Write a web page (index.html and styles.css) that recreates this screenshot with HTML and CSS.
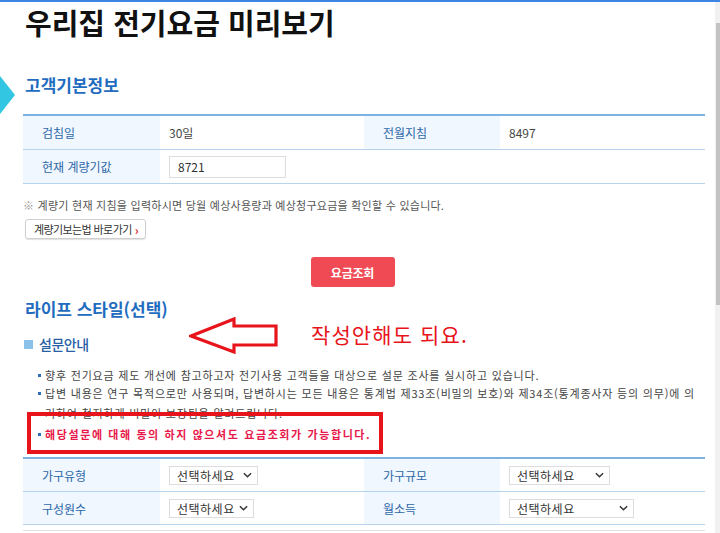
FILE: index.html
```html
<!DOCTYPE html>
<html lang="ko">
<head>
<meta charset="utf-8">
<title>우리집 전기요금 미리보기</title>
<link rel="stylesheet" href="styles.css">
</head>
<body>
<div class="topbar"></div>
<div class="scrollbar"><div class="thumb"></div></div>
<div class="page">
  <h1 class="title">우리집 전기요금 미리보기</h1>

  <h2 class="sec sec-first">고객기본정보</h2>
  <div class="grid">
    <div class="lab">검침일</div>
    <div class="val">30일</div>
    <div class="lab">전월지침</div>
    <div class="val">8497</div>
    <div class="lab">현재 계량기값</div>
    <div class="val"><div class="input">8721</div></div>
    <div class="lab blank"></div>
    <div class="val"></div>
  </div>

  <p class="note"><span class="mark">※</span> 계량기 현재 지침을 입력하시면 당월 예상사용량과 예상청구요금을 확인할 수 있습니다.</p>
  <div class="link-row"><span class="link-btn">계량기보는법 바로가기 <span class="chev">›</span></span></div>

  <div class="center"><span class="red-btn">요금조회</span></div>

  <h2 class="sec sec-second">라이프 스타일(선택)</h2>
  <h3 class="sub"><span class="sq"></span>설문안내</h3>
  <ul class="bullets">
    <li>향후 전기요금 제도 개선에 참고하고자 전기사용 고객들을 대상으로 설문 조사를 실시하고 있습니다.</li>
    <li>답변 내용은 연구 목적으로만 사용되며, 답변하시는 모든 내용은 통계법 제33조(비밀의 보호)와 제34조(통계종사자 등의 의무)에 의<span class="cont">거하여 철저하게 비밀이 보장됨을 알려드립니다.</span></li>
    <li class="warn">해당설문에 대해 동의 하지 않으셔도 요금조회가 가능합니다.</li>
  </ul>

  <div class="grid survey">
    <div class="lab">가구유형</div>
    <div class="val"><div class="sel w1">선택하세요<svg viewBox="0 0 10 6" class="dd"><path d="M1 1l4 4 4-4" fill="none" stroke="#333" stroke-width="1.6"/></svg></div></div>
    <div class="lab">가구규모</div>
    <div class="val"><div class="sel w2">선택하세요<svg viewBox="0 0 10 6" class="dd"><path d="M1 1l4 4 4-4" fill="none" stroke="#333" stroke-width="1.6"/></svg></div></div>
    <div class="lab">구성원수</div>
    <div class="val"><div class="sel w3">선택하세요<svg viewBox="0 0 10 6" class="dd"><path d="M1 1l4 4 4-4" fill="none" stroke="#333" stroke-width="1.6"/></svg></div></div>
    <div class="lab">월소득</div>
    <div class="val"><div class="sel w4">선택하세요<svg viewBox="0 0 10 6" class="dd"><path d="M1 1l4 4 4-4" fill="none" stroke="#333" stroke-width="1.6"/></svg></div></div>
  </div>
  <div class="next-line"></div>

  <svg class="anno-arrow" viewBox="0 0 90 38" width="90" height="38">
    <polygon points="2,19 45,2 45,9 87,9 87,28 45,28 45,35" fill="none" stroke="#e8141c" stroke-width="3.2" stroke-linejoin="miter"/>
  </svg>
  <div class="anno-text">작성안해도 되요.</div>
  <div class="anno-box"></div>
</div>
</body>
</html>
```

FILE: styles.css
```css
* { box-sizing: border-box; }
html, body { margin: 0; padding: 0; }
body {
  width: 720px;
  height: 533px;
  overflow: hidden;
  background: #fff;
  font-family: "Noto Sans CJK KR", "Noto Sans", sans-serif;
  color: #333;
  position: relative;
}
.topbar { height: 2px; background: #3d84e4; }
.scrollbar {
  position: absolute;
  right: 0; top: 2px;
  width: 5px; height: 531px;
  background: #f1f1f1;
}
.scrollbar .thumb {
  margin-top: 21px;
  margin-left: 1px;
  width: 4px; height: 282px;
  background: #c3c3c3;
}
.page {
  position: relative;
  display: flow-root;
  width: 705px;
  padding-left: 23px;
}
.title {
  margin: 5px 0 0 2px;
  font-size: 29px;
  line-height: 30px;
  letter-spacing: 0;
  font-weight: 700;
  color: #111;
}
.sec {
  position: relative;
  margin: 0 0 0 2px;
  font-size: 17px;
  line-height: 20px;
  letter-spacing: 0;
  font-weight: 700;
  color: #1f6cc0;
}
.sec-first { margin-top: 38px; margin-bottom: 19px; }
.sec-first::before {
  content: "";
  position: absolute;
  left: -25px; top: 1px;
  width: 15px; height: 38px;
  background: #33c6e2;
  clip-path: polygon(0 0, 100% 50%, 0 100%);
}
.grid {
  display: grid;
  grid-template-columns: 137px 204px 136px 205px;
  border-top: 2px solid #7db2e2;
}
.grid > div {
  height: 34px;
  border-bottom: 1px solid #b6d4ef;
  display: flex;
  align-items: center;
  font-size: 12px;
}
.lab {
  background: #f0f7fe;
  color: #2d68a8;
  padding-left: 19px;
  letter-spacing: 0;
}
.grid > .blank { background: #fff; }
.val {
  padding-left: 9px;
  color: #444;
}
.input {
  width: 117px;
  height: 22px;
  border: 1px solid #ddd;
  padding-left: 8px;
  display: flex;
  align-items: center;
  font-size: 12px;
  color: #333;
}
.note {
  margin: 13px 0 0 0;
  font-size: 11px;
  line-height: 16px;
  color: #555;
  letter-spacing: 0.25px;
}
.note .mark { color: #999; }
.link-row { margin-top: 2px; padding-left: 2px; }
.link-btn {
  display: inline-flex;
  align-items: center;
  height: 20px;
  padding: 0 7px 0 8px;
  border: 1px solid #cfcfcf;
  border-radius: 3px;
  box-shadow: 0 1px 1px rgba(0,0,0,0.12);
  font-size: 11px;
  color: #333;
  letter-spacing: -0.6px;
}
.link-btn .chev { color: #e0262d; font-weight: 700; margin-left: 3px; font-size: 12px; }
.center {
  display: flex;
  justify-content: center;
  margin-top: 18px;
  padding-right: 23px;
}
.red-btn {
  display: inline-flex;
  align-items: center;
  justify-content: center;
  width: 84px;
  height: 30px;
  background: #f04b54;
  border-radius: 3px;
  color: #fff;
  font-size: 12px;
  font-weight: 700;
  letter-spacing: -0.2px;
}
.sec-second { margin-top: 12px; }
.sub {
  display: flex;
  align-items: center;
  margin: 16px 0 0 1px;
  font-size: 14px;
  line-height: 18px;
  font-weight: 500;
  color: #2a5fa6;
  letter-spacing: -0.5px;
}
.sub .sq {
  width: 9px; height: 9px;
  background: #8cc2ea;
  margin-right: 6px;
}
.bullets {
  list-style: none;
  margin: 13px 0 0 0;
  padding: 0 0 0 22px;
  font-size: 11px;
  line-height: 18px;
  color: #444;
  letter-spacing: 0.8px;
}
.bullets li { position: relative; white-space: nowrap; }
.bullets li::before {
  content: "";
  position: absolute;
  left: -7px; top: 8px;
  width: 3px; height: 3px;
  background: #2f6db5;
}
.bullets .cont { display: block; margin-top: 2px; }
.bullets .warn {
  margin-top: 3px;
  color: #e8184a;
  font-weight: 700;
  letter-spacing: 1.6px;
}
.survey { margin-top: 14px; }
.survey > div { height: 33px; }
.sel {
  display: flex;
  align-items: center;
  justify-content: space-between;
  height: 19px;
  border: 1px solid #ddd;
  padding: 0 5px 0 7px;
  font-size: 12px;
  color: #333;
  letter-spacing: 0.5px;
}
.sel .dd { width: 9px; height: 6px; }
.w1 { width: 89px; }
.w2 { width: 101px; }
.w3 { width: 85px; }
.w4 { width: 125px; }
.next-line { margin-top: 5px; width: 682px; border-top: 1px solid #e2e2e2; }
.anno-arrow {
  position: absolute;
  left: 189px; top: 315px;
}
.anno-text {
  position: absolute;
  left: 311px; top: 317px;
  font-size: 21px;
  line-height: 30px;
  color: #e8141c;
  letter-spacing: 1.1px;
}
.anno-box {
  position: absolute;
  left: 27px; top: 410px;
  width: 356px; height: 42px;
  border: 4px solid #e8141c;
}
```
